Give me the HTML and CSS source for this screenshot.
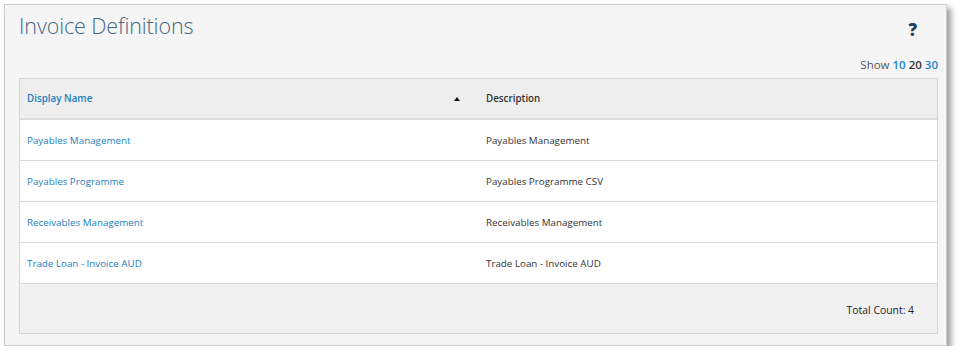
FILE: index.html
```html
<!DOCTYPE html>
<html>
<head>
<meta charset="utf-8">
<link rel="stylesheet" href="styles.css">
</head>
<body>
<div class="panel">
  <div class="top">
    <h1 class="title">Invoice Definitions</h1>
    <span class="help">?</span>
  </div>
  <div class="pager">Show <a class="on">10</a> <span class="cur">20</span> <a class="on">30</a></div>
  <div class="grid">
    <div class="row head">
      <div class="c1 sort">Display Name <span class="arrow"></span></div>
      <div class="c2">Description</div>
    </div>
    <div class="row"><div class="c1 link">Payables Management</div><div class="c2">Payables Management</div></div>
    <div class="row"><div class="c1 link">Payables Programme</div><div class="c2">Payables Programme CSV</div></div>
    <div class="row"><div class="c1 link">Receivables Management</div><div class="c2">Receivables Management</div></div>
    <div class="row"><div class="c1 link">Trade Loan - Invoice AUD</div><div class="c2">Trade Loan - Invoice AUD</div></div>
    <div class="foot">Total Count: 4</div>
  </div>
</div>
</body>
</html>
```
FILE: styles.css
```css
* { box-sizing: border-box; }
body {
  margin: 0;
  background: #ffffff;
  font-family: "Open Sans", "Segoe UI", Arial, sans-serif;
}
.panel {
  margin: 4px 0 0 4px;
  width: 943px;
  height: 342px;
  background: #f5f5f5;
  border: 1px solid #cfcfcf;
  box-shadow: 4px 4px 6px rgba(0,0,0,0.4);
  padding: 0 8px 0 14px;
}
.top {
  display: flex;
  justify-content: space-between;
  align-items: flex-start;
  height: 51px;
}
.title {
  margin: 6px 0 0 0;
  font-weight: 300;
  font-size: 21.5px;
  color: #44677f;
  letter-spacing: -0.1px;
}
.help {
  margin: 13px 21px 0 0;
  font-weight: 800;
  font-size: 17px;
  color: #1c3f5f;
}
.pager {
  text-align: right;
  font-size: 11.5px;
  color: #555;
  height: 22px;
  line-height: 18px;
}
.pager .on { color: #1a86c8; font-weight: 600; }
.pager .cur { color: #333; font-weight: 600; }
.grid {
  border: 1px solid #d6d6d6;
  background: #fff;
}
.row {
  display: flex;
  height: 41px;
  align-items: center;
  border-bottom: 1px solid #d9d9d9;
  font-size: 9.8px;
  color: #333;
}
.row.head {
  background: #eeeeee;
  font-weight: 600;
  border-bottom: 2px solid #dcdcdc;
}
.c1 {
  width: 458px;
  padding-left: 7px;
  display: flex;
  align-items: center;
  justify-content: space-between;
}
.c2 { padding-left: 8px; }
.link { color: #1d7fbe; }
.sort { color: #1d7fbe; }
.arrow {
  width: 0; height: 0;
  border-left: 3.5px solid transparent;
  border-right: 3.5px solid transparent;
  border-bottom: 4px solid #111;
  margin-right: 18px;
}
.foot {
  height: 49px;
  background: #f0f0f0;
  text-align: right;
  padding-right: 23px;
  font-size: 10.4px;
  color: #222;
  line-height: 52px;
}
```
